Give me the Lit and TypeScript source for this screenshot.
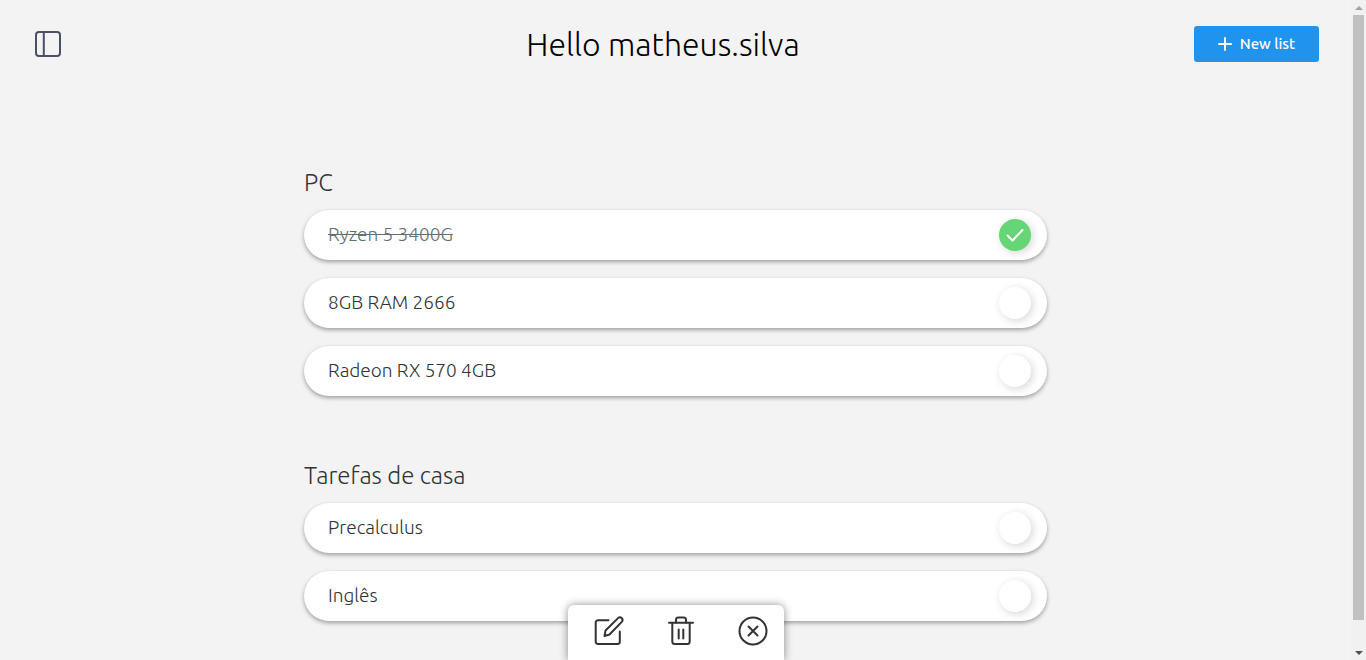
import { LitElement, html, svg, css } from "lit";
import { customElement, state } from "lit/decorators.js";
import { classMap } from "lit/directives/class-map.js";

interface Item { id: string; text: string; done: boolean; }
interface List { title: string; items: Item[]; }

const icons = {
  sidebar: svg`<rect x="4" y="4" width="24" height="24" rx="3"/><path d="M11.800 4v24"/>`,
  edit: svg`<path d="M15.500 5.200H5a2.300 2.300 0 0 0-2.300 2.300V26.700A2.300 2.300 0 0 0 5 29H24.500a2.300 2.300 0 0 0 2.300-2.300V16.500"/><path d="M11.500 21l1-5.500L25.300 2.900a2.650 2.650 0 0 1 3.700 3.700L16.500 19.500z"/>`,
  trash: svg`<path d="M4 7.700h24M7.300 8v18.500A2.500 2.500 0 0 0 9.800 29h12.400a2.500 2.500 0 0 0 2.500-2.500V8M11 8V4.700A2.300 2.300 0 0 1 13.300 2.400h5.400A2.300 2.300 0 0 1 21 4.700V8M13.700 14.500v9M18.300 14.500v9"/>`,
  close: svg`<circle cx="16" cy="16" r="13.500"/><path d="M11.500 11.500l9 9M20.500 11.500l-9 9"/>`,
};

@customElement("app-root")
export class AppRoot extends LitElement {
  @state() private lists: List[] = [
    { title: "PC", items: [
      { id: "ryzen", text: "Ryzen 5 3400G", done: true },
      { id: "ram", text: "8GB RAM 2666", done: false },
      { id: "radeon", text: "Radeon RX 570 4GB", done: false },
    ] },
    { title: "Tarefas de casa", items: [
      { id: "precalculus", text: "Precalculus", done: false },
      { id: "ingles", text: "Inglês", done: false },
    ] },
  ];

  static styles = css`
    * { box-sizing: border-box; }
    :host {
      display: flex;
      height: 100vh;
      overflow: hidden;
      background: #f3f3f3;
      color: #2d3436;
      font-family: Ubuntu, "Noto Sans", sans-serif;
      font-weight: 300;
    }
    .page { position: relative; flex: 1; min-width: 0; overflow: hidden; }
    header {
      display: flex;
      align-items: center;
      justify-content: space-between;
      height: 88px;
      padding: 0 32px;
    }
    button { border: 0; background: none; padding: 0; font: inherit; color: inherit; cursor: pointer; }
    svg { display: block; fill: none; stroke: currentColor; stroke-width: 2; stroke-linecap: round; stroke-linejoin: round; }
    .menu { width: 100px; color: #4b4f66; }
    h1 { margin: 0; color: #000; font-size: 32px; line-height: 40px; font-weight: 300; }
    .new {
      display: flex;
      align-items: center;
      justify-content: center;
      gap: 8px;
      width: 125px;
      height: 36px;
      padding-bottom: 1px;
      border-radius: 3px;
      background: #2093ee;
      color: #fff;
      font-size: 15px;
      font-weight: 500;
    }
    main { width: 55%; margin: 0 auto; padding-top: 79px; }
    section { margin-bottom: 64px; }
    h2 { margin: 0 0 11px; font-size: 24px; line-height: 32px; font-weight: 300; }
    ul { display: grid; gap: 18px; margin: 0; padding: 0; list-style: none; }
    .item {
      display: flex;
      align-items: center;
      justify-content: space-between;
      height: 50px;
      padding: 0 16px 0 24px;
      border-radius: 25px;
      background: #fff;
      box-shadow: 0 2px 4px rgba(0, 0, 0, 0.35);
      font-size: 19px;
    }
    label { padding-bottom: 2px; }
    .done label { color: #636e72; text-decoration: line-through; }
    .tick { display: grid; width: 32px; height: 32px; }
    .tick > * { grid-area: 1 / 1; }
    input {
      appearance: none;
      width: 32px;
      height: 32px;
      margin: 0;
      border-radius: 50%;
      background: #fff;
      box-shadow: 2px 2px 8px rgba(0, 0, 0, 0.16);
    }
    input:checked { background: #66d575; }
    .mark { z-index: 1; color: #fff; place-self: center; pointer-events: none; }
    .tools {
      position: absolute;
      bottom: 0;
      left: 50%;
      z-index: 2;
      display: flex;
      width: 216px;
      height: 55px;
      transform: translateX(-50%);
      border-radius: 6px 6px 0 0;
      background: #fff;
      box-shadow: 0 0 8px rgba(0, 0, 0, 0.45);
      color: #333;
    }
    .tools button { display: flex; flex: 1; justify-content: center; padding-top: 10px; padding-left: 10px; }
    .scrollbar { display: flex; flex-direction: column; align-items: center; width: 15px; background: #f1f1f1; }
    .arrow { width: 15px; height: 15px; fill: #505050; stroke: none; }
    .arrow.faded { fill: #a3a3a3; }
    .thumb { flex: 1; width: 11px; margin-bottom: 25px; background: #c1c1c1; }
  `;

  private toggle(item: Item) {
    item.done = !item.done;
    this.requestUpdate();
  }

  private icon(shape: unknown) {
    return html`<svg width="32" height="32" viewBox="0 0 32 32" aria-hidden="true">${shape}</svg>`;
  }

  render() {
    return html`
      <div class="page">
        <header>
          <button class="menu" aria-label="Toggle sidebar">${this.icon(icons.sidebar)}</button>
          <h1>Hello matheus.silva</h1>
          <button class="new">
            <svg width="14" height="14" viewBox="0 0 14 14" aria-hidden="true"><path d="M7 1v12M1 7h12"/></svg>
            New list
          </button>
        </header>
        <main>
          ${this.lists.map((list) => html`
            <section>
              <h2>${list.title}</h2>
              <ul>
                ${list.items.map((item) => html`
                  <li class=${classMap({ item: true, done: item.done })}>
                    <label for=${item.id}>${item.text}</label>
                    <span class="tick">
                      <input type="checkbox" id=${item.id} .checked=${item.done} @change=${() => this.toggle(item)} />
                      ${item.done ? html`<svg class="mark" width="20" height="20" viewBox="0 0 20 20" aria-hidden="true"><path d="M2.500 10.500l5 5L17.500 5"/></svg>` : ""}
                    </span>
                  </li>`)}
              </ul>
            </section>`)}
        </main>
        <div class="tools" role="toolbar" aria-label="Item actions">
          <button aria-label="Edit">${this.icon(icons.edit)}</button>
          <button aria-label="Delete">${this.icon(icons.trash)}</button>
          <button aria-label="Close">${this.icon(icons.close)}</button>
        </div>
      </div>
      <div class="scrollbar" aria-hidden="true">
        <svg class="arrow faded" viewBox="0 0 15 15"><path d="M4 10l4-4 4 4z"/></svg>
        <div class="thumb"></div>
        <svg class="arrow" viewBox="0 0 15 15"><path d="M4 6h8l-4 4z"/></svg>
      </div>
    `;
  }
}
